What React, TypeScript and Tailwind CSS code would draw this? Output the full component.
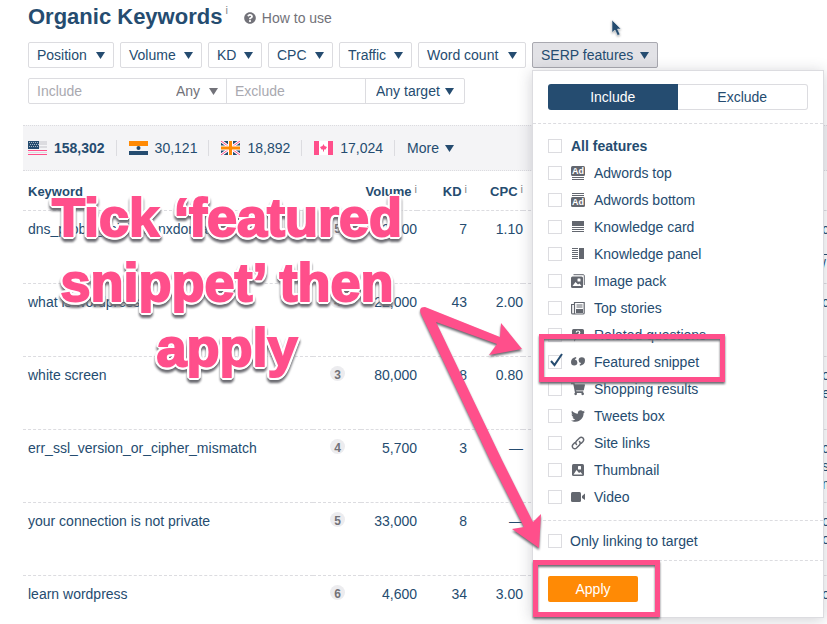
import React from "react";
import { FaQuestionCircle, FaShoppingCart, FaTwitter } from "react-icons/fa";

function Caret({ className = "text-[#254c70]" }: { className?: string }) {
  return (
    <svg viewBox="0 0 9 7" className={`h-[7px] w-[9px] shrink-0 ${className}`} aria-hidden="true">
      <path d="M0 0H9L4.5 7Z" fill="currentColor" />
    </svg>
  );
}

const filters = [
  { label: "Position", width: "w-[86px]" },
  { label: "Volume", width: "w-[82px]" },
  { label: "KD", width: "w-[54px]" },
  { label: "CPC", width: "w-[65px]" },
  { label: "Traffic", width: "w-[73px]" },
  { label: "Word count", width: "w-[108px]" },
];

function FlagUS() {
  return (
    <svg viewBox="0 0 19 14" className="h-[14px] w-[19px]" aria-hidden="true">
      <rect width="19" height="14" fill="#f4f4f6" />
      <path d="M11 .5H19M11 3.500H19" stroke="#dcdce0" strokeWidth="1" />
      <path d="M11 2H19M11 6H19" stroke="#c4c4ca" strokeWidth="1" />
      <path d="M0 9.500H19M0 13.500H19" stroke="#ff4f8b" strokeWidth="1" />
      <path d="M0 11.500H19" stroke="#dcdce0" strokeWidth="1" />
      <rect width="11" height="8" fill="#254c70" />
      <path d="M1 1.500H10M2 3.500H11M1 5.500H10" stroke="#aab6c4" strokeWidth="1" strokeDasharray="1 1" />
    </svg>
  );
}

function FlagIN() {
  return (
    <svg viewBox="0 0 19 14" className="h-[14px] w-[19px]" aria-hidden="true">
      <rect width="19" height="14" fill="#f4f4f6" />
      <rect width="19" height="5" fill="#ff8a05" />
      <rect y="10" width="19" height="4" fill="#254c70" />
      <circle cx="9.500" cy="7" r="2" fill="#254c70" />
    </svg>
  );
}

function FlagUK() {
  return (
    <svg viewBox="0 0 19 14" className="h-[14px] w-[19px]" aria-hidden="true">
      <rect width="19" height="14" fill="#254c70" />
      <path d="M0 0L19 14M19 0L0 14" stroke="#fff" strokeWidth="3" />
      <path d="M0 0L19 14M19 0L0 14" stroke="#ff4f8b" strokeWidth="1" />
      <path d="M9.500 0V14M0 7H19" stroke="#fff" strokeWidth="5" />
      <path d="M9.500 0V14M0 7H19" stroke="#ff8a05" strokeWidth="3" />
    </svg>
  );
}

function FlagCA() {
  return (
    <svg viewBox="0 0 19 14" className="h-[14px] w-[19px]" aria-hidden="true">
      <rect width="19" height="14" fill="#fff" />
      <rect width="5" height="14" fill="#ff4f8b" />
      <rect x="14" width="5" height="14" fill="#ff4f8b" />
      <path d="M9.500 3L10.500 5L13 6L11.500 8.500H10V10.500H9V8.500H7.500L6 6L8.500 5Z" fill="#ff4f8b" />
    </svg>
  );
}

const countries = [
  { flag: <FlagUS />, count: "158,302", weight: "font-bold" },
  { flag: <FlagIN />, count: "30,121", weight: "" },
  { flag: <FlagUK />, count: "18,892", weight: "" },
  { flag: <FlagCA />, count: "17,024", weight: "" },
];

const rows = [
  { keyword: "dns_probe_finished_nxdomain", pos: 5, volume: "93,000", kd: "7", cpc: "1.10", url: ["c", "_", "/"] },
  { keyword: "what is wordpress", pos: 4, volume: "22,000", kd: "43", cpc: "2.00", url: ["c"] },
  { keyword: "white screen", pos: 3, volume: "80,000", kd: "8", cpc: "0.80", url: ["o", "e"] },
  { keyword: "err_ssl_version_or_cipher_mismatch", pos: 4, volume: "5,700", kd: "3", cpc: "—", url: ["c", "s", "m"] },
  { keyword: "your connection is not private", pos: 5, volume: "33,000", kd: "8", cpc: "—", url: ["o", "o"] },
  { keyword: "learn wordpress", pos: 6, volume: "4,600", kd: "34", cpc: "3.00", url: ["o"] },
];

function Icon({ children }: { children: React.ReactNode }) {
  return (
    <svg viewBox="0 0 14 14" className="size-[14px]" fill="none" stroke="currentColor" aria-hidden="true">
      {children}
    </svg>
  );
}

const adText = "fill-white stroke-none font-['Liberation_Sans',Arial,sans-serif] text-[9px] font-bold";

const features = [
  {
    label: "Adwords top",
    icon: (
      <Icon>
        <rect width="14" height="10" rx="1.500" fill="currentColor" stroke="none" />
        <text x="7" y="8" textAnchor="middle" className={adText}>Ad</text>
        <path d="M1 11.500H13M1 13.500H13" />
      </Icon>
    ),
  },
  {
    label: "Adwords bottom",
    icon: (
      <Icon>
        <rect y="4" width="14" height="10" rx="1.500" fill="currentColor" stroke="none" />
        <text x="7" y="12" textAnchor="middle" className={adText}>Ad</text>
        <path d="M1 .5H13M1 2.500H13" />
      </Icon>
    ),
  },
  {
    label: "Knowledge card",
    icon: (
      <Icon>
        <rect x="1" y="1" width="12" height="5" fill="currentColor" stroke="none" />
        <path d="M1 7.500H13M1 9.500H13M1 11.500H13" />
      </Icon>
    ),
  },
  {
    label: "Knowledge panel",
    icon: (
      <Icon>
        <rect x="8" y="1" width="5" height="11" fill="currentColor" stroke="none" />
        <path d="M1 1.500H7M1 3.500H7M1 5.500H7M1 7.500H7M1 9.500H7M1 11.500H7" />
      </Icon>
    ),
  },
  {
    label: "Image pack",
    icon: (
      <Icon>
        <path d="M2.500 .7H12.300Q13.300 .7 13.300 1.700V11" />
        <rect y="2.500" width="12" height="11.500" rx="1.500" fill="currentColor" stroke="none" />
        <path d="M1.500 12L4.500 8L7 10.500L8.500 9.500L10.500 12Z" fill="#fff" stroke="none" />
        <rect x="6.500" y="4.500" width="3" height="3" rx=".5" fill="#fff" stroke="none" />
      </Icon>
    ),
  },
  {
    label: "Top stories",
    icon: (
      <Icon>
        <path d="M3.500 3.500H.6V12Q.6 13 2 13H12Q13.200 13 13.200 12V1.500H3.500V12Q3.500 13 2 13" strokeWidth="1.200" />
        <path d="M5.500 4H11.500M5.500 6H11.500" />
        <rect x="5" y="8" width="7" height="4" fill="currentColor" stroke="none" />
      </Icon>
    ),
  },
  {
    label: "Related questions",
    icon: (
      <Icon>
        <path d="M2.500 1H11.500Q13 1 13 2.500V9Q13 10.500 11.500 10.500H6L3 13.500V10.500H2.500Q1 10.500 1 9V2.500Q1 1 2.500 1Z" fill="currentColor" stroke="none" />
        <path d="M5.200 4.500Q5.200 3 7 3Q8.800 3 8.800 4.500Q8.800 5.500 7 6.500M7 8V9.200" stroke="#fff" strokeWidth="1.200" />
      </Icon>
    ),
  },
  {
    label: "Featured snippet",
    checked: true,
    icon: (
      <Icon>
        <path d="M5 2Q0 3 0 7Q0 10.500 3.200 10.500Q6.400 10.500 6.400 7.500Q6.400 5 4 4.700Q4.300 3.700 5.400 3.300Z" fill="currentColor" stroke="none" />
        <path d="M9 10.800Q14 9.800 14 5.500Q14 2.300 10.800 2.300Q7.600 2.300 7.600 5.200Q7.600 7.800 10 8Q9.700 9.100 8.600 9.500Z" fill="currentColor" stroke="none" />
      </Icon>
    ),
  },
  { label: "Shopping results", icon: <FaShoppingCart className="size-[14px]" /> },
  { label: "Tweets box", icon: <FaTwitter className="size-[14px]" /> },
  {
    label: "Site links",
    icon: (
      <Icon>
        <path d="M5.500 8.500Q4 6.500 5.500 5L8.500 2Q10.200 .6 12 2Q13.400 3.800 12 5.500L10.300 7.200M8.500 5.500Q10 7.500 8.500 9L5.500 12Q3.800 13.400 2 12Q.6 10.200 2 8.500L3.700 6.800" strokeWidth="1.500" strokeLinecap="round" />
      </Icon>
    ),
  },
  {
    label: "Thumbnail",
    icon: (
      <Icon>
        <rect x="1" y="1" width="12" height="12" rx="1.500" fill="currentColor" stroke="none" />
        <path d="M2.500 11.500L5.500 7L8 10L9.500 9L11.500 11.500Z" fill="#fff" stroke="none" />
        <rect x="7" y="3" width="3" height="3.500" rx=".5" fill="#fff" stroke="none" />
      </Icon>
    ),
  },
  {
    label: "Video",
    icon: (
      <Icon>
        <rect y="2" width="10" height="10" rx="1.500" fill="currentColor" stroke="none" />
        <path d="M11 6L14 3.500V10L11 8Z" fill="currentColor" stroke="none" />
      </Icon>
    ),
  },
];

function CheckBox({ checked = false }: { checked?: boolean }) {
  return (
    <span className="relative grid size-[14px] shrink-0">
      <input
        type="checkbox"
        defaultChecked={checked}
        className="peer size-[14px] appearance-none border border-[#dcdce0] bg-white"
      />
      <svg
        viewBox="0 0 14 14"
        className="pointer-events-none absolute inset-0 hidden size-[14px] overflow-visible peer-checked:block"
        aria-hidden="true"
      >
        <path d="M3 6L6.500 10L14 -1" fill="none" stroke="#254c70" strokeWidth="2" />
      </svg>
    </span>
  );
}

function FeaturesMenu() {
  return (
    <div className="absolute top-full left-0 z-10 mt-[2px] w-[292px] border border-[#dcdce0] bg-white shadow-[0_2px_14px_rgba(40,40,60,0.22)]">
      <div className="border-b border-dashed border-[#dcdce0] px-[15px] py-[13px]">
        <div className="flex h-[26px]">
          <button type="button" className="flex-1 rounded-l-[3px] bg-[#254c70] text-white">
            Include
          </button>
          <button type="button" className="flex-1 rounded-r-[3px] border border-l-0 border-[#dcdce0]">
            Exclude
          </button>
        </div>
      </div>
      <div className="border-b border-dashed border-[#dcdce0] px-[15px] pt-2 pb-[10px]">
        <label className="flex h-[27px] items-center gap-[9px] font-bold">
          <CheckBox />
          All features
        </label>
        {features.map((f) => (
          <label key={f.label} className="flex h-[27px] items-center gap-[9px]">
            <CheckBox checked={f.checked} />
            <span className="text-[#63676f]">{f.icon}</span>
            {f.label}
          </label>
        ))}
      </div>
      <label className="flex h-[40px] items-center gap-[8px] border-b border-dashed border-[#dcdce0] px-[15px]">
        <CheckBox />
        Only linking to target
      </label>
      <div className="p-[15px]">
        <button type="button" className="h-[26px] w-[90px] rounded-[2px] bg-[#ff8a05] text-white">
          Apply
        </button>
      </div>
    </div>
  );
}

function Annotations() {
  return (
    <div className="pointer-events-none absolute inset-0 z-20" aria-hidden="true">
      <p className="absolute top-[185px] left-[27px] w-[400px] text-center text-[54px] leading-[65px] font-bold text-[#ff4f8b] drop-shadow-[0_3px_1px_#6c6c72] [-webkit-text-stroke:2px_#ff4f8b] [text-shadow:3px_0_white,-3px_0_white,0_3px_white,0_-3px_white,2px_2px_white,-2px_2px_white,2px_-2px_white,-2px_-2px_white,3px_1px_white,-3px_1px_white,3px_-1px_white,-3px_-1px_white,1px_3px_white,-1px_3px_white,1px_-3px_white,-1px_-3px_white]">
        Tick ‘featured
        <br />
        snippet’ then
        <br />
        apply
      </p>
      <div className="absolute top-[334px] left-[539px] h-[48px] w-[186px] border-5 border-[#ff4f8b] drop-shadow-[0_2px_1px_#6c6c72]" />
      <div className="absolute top-[560px] left-[533px] h-[57px] w-[127px] border-5 border-[#ff4f8b] drop-shadow-[0_2px_1px_#6c6c72]" />
      <svg viewBox="0 0 827 624" className="absolute top-0 left-0 h-[624px] w-[827px] drop-shadow-[0_2px_1px_#6c6c72]">
        <path
          d="M425 307L500 337L501 323L522 349L489 355L497 344L436 322L502 460L533 522L541 514L539 548L512 529L524 527L490 460L421 314Q418 307 425 307Z"
          fill="#ff4f8b"
        />
      </svg>
      <svg viewBox="0 0 10 16" className="absolute top-[20px] left-[612px] h-[16px] w-[10px] overflow-visible drop-shadow-[0_1px_1px_#aaa]">
        <path d="M0 0V12.500L3 10L5.500 15.500L8 14.500L5.500 9H9Z" fill="#254c70" stroke="#fff" strokeWidth=".5" />
      </svg>
    </div>
  );
}

function HeadCell({ label }: { label: string }) {
  return (
    <th className="pt-1">
      <span className="float-right flex items-start gap-[3px]">
        {label}
        <span className="text-[11px] leading-[12px] font-normal text-[#85858c]">i</span>
      </span>
    </th>
  );
}

export default function App() {
  return (
    <div className="relative min-h-screen overflow-hidden bg-white font-['Liberation_Sans',Arial,sans-serif] text-[14px] leading-[18px] text-[#254c70]">
      <header className="flex h-[42px] items-start pt-1 pl-[28px]">
        <h1 className="text-[22px] leading-[26px] font-bold">Organic Keywords</h1>
        <span className="ml-[3px] text-[11px] leading-[12px] text-[#85858c]">i</span>
        <a href="#how" className="mt-[5px] ml-[16px] flex items-center gap-[6px] text-[#727279]">
          <FaQuestionCircle className="size-[12px]" />
          How to use
        </a>
      </header>

      <div className="flex gap-[6px] pl-[28px]">
        {filters.map((f) => (
          <button
            key={f.label}
            type="button"
            className={`flex h-[26px] shrink-0 items-center justify-between rounded-[2px] border border-[#dcdce0] px-2 whitespace-nowrap ${f.width}`}
          >
            {f.label}
            <Caret />
          </button>
        ))}
        <div className="relative">
          <button
            type="button"
            className="flex h-[26px] w-[126px] items-center justify-between rounded-[2px] border border-[#a9a9b0] bg-[#e2e2e6] px-2 whitespace-nowrap"
          >
            SERP features
            <Caret />
          </button>
          <FeaturesMenu />
        </div>
      </div>

      <div className="mt-[10px] ml-[28px] flex h-[26px] w-[437px] rounded-[2px] border border-[#dcdce0]">
        <input
          type="text"
          aria-label="Include"
          placeholder="Include"
          className="w-[139px] px-2 placeholder:text-[#a9a9b0] focus:outline-none"
        />
        <span className="relative flex w-[58px] items-center">
          <select aria-label="Include mode" className="w-full appearance-none pl-2 text-[#727279] focus:outline-none">
            <option>Any</option>
          </select>
          <span className="pointer-events-none absolute right-2">
            <Caret className="text-[#727279]" />
          </span>
        </span>
        <input
          type="text"
          aria-label="Exclude"
          placeholder="Exclude"
          className="w-[140px] border-x border-[#dcdce0] px-2 placeholder:text-[#a9a9b0] focus:outline-none"
        />
        <span className="relative flex flex-1 items-center">
          <select aria-label="Target" className="w-full appearance-none pl-[10px] focus:outline-none">
            <option>Any target</option>
          </select>
          <span className="pointer-events-none absolute right-[10px]">
            <Caret />
          </span>
        </span>
      </div>

      <nav className="mt-[21px] ml-[23px] flex h-[46px] items-center border-y border-dotted border-[#dcdce0] bg-[#f4f4f6] pl-[5px]">
        {countries.map((c) => (
          <React.Fragment key={c.count}>
            <a href="#country" className={`flex items-center gap-[7px] ${c.weight}`}>
              {c.flag}
              {c.count}
            </a>
            <span className="mr-[12px] ml-[11px] h-[16px] w-px bg-[#dcdce0]" />
          </React.Fragment>
        ))}
        <button type="button" className="flex items-center gap-[6px]">
          More
          <Caret />
        </button>
      </nav>

      <div className="ml-[23px] overflow-hidden">
        <table className="w-full min-w-[860px] table-fixed border-collapse">
          <colgroup>
            <col className="w-[290px]" />
            <col className="w-[48px]" />
            <col className="w-[56px]" />
            <col className="w-[50px]" />
            <col className="w-[56px]" />
            <col className="w-[275px]" />
            <col />
          </colgroup>
          <thead>
            <tr className="h-[39px] border-b border-dashed border-[#dcdce0] text-[13px] whitespace-nowrap">
              <th className="pt-1 pl-[5px] text-left">Keyword</th>
              <th />
              <HeadCell label="Volume" />
              <HeadCell label="KD" />
              <HeadCell label="CPC" />
              <th />
              <th />
            </tr>
          </thead>
          <tbody>
            {rows.map((r) => (
              <tr key={r.keyword} className="h-[73px] border-b border-dashed border-[#dcdce0] align-top [&>td]:pt-[9px]">
                <td className="pl-[5px] whitespace-nowrap">{r.keyword}</td>
                <td>
                  <span className="ml-[17px] grid size-[15px] place-items-center rounded-full bg-[#ececef] text-[12px] font-bold text-[#727279]">
                    {r.pos}
                  </span>
                </td>
                <td className="text-right">{r.volume}</td>
                <td className="text-right">{r.kd}</td>
                <td className="text-right">{r.cpc}</td>
                <td />
                <td className="pl-[24px]">
                  {r.url.map((u, i) => (
                    <div key={i}>{u}</div>
                  ))}
                </td>
              </tr>
            ))}
          </tbody>
        </table>
      </div>

      <Annotations />
    </div>
  );
}
